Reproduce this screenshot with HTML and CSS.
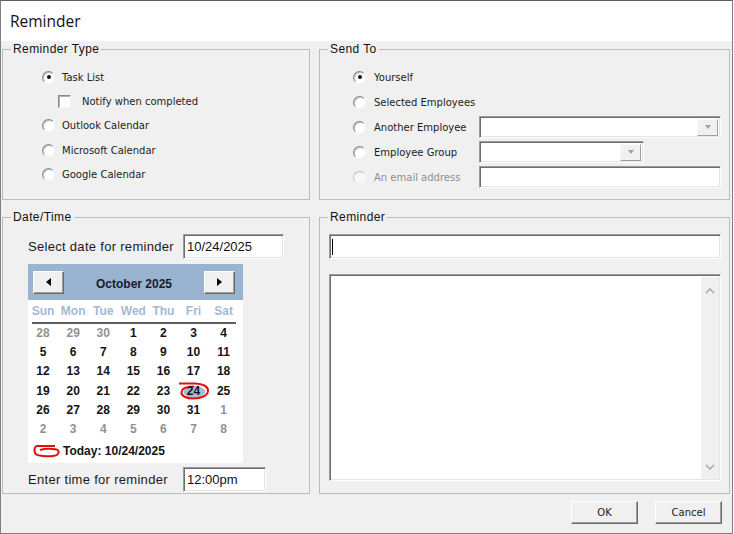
FILE: index.html
```html
<!DOCTYPE html>
<html lang="en">
<head>
  <meta charset="UTF-8">
  <title>Reminder</title>
  <link rel="stylesheet" href="styles.css">
</head>
<body>
  <div class="window">
    <div class="titlebar">Reminder</div>
    <div class="content">
      <div class="groups">

        <fieldset class="group">
          <legend>Reminder Type</legend>
          <div class="type-list">
            <div class="opt"><span class="radio checked"></span>Task List</div>
            <div class="opt sub"><span class="check"></span>Notify when completed</div>
            <div class="opt"><span class="radio"></span>Outlook Calendar</div>
            <div class="opt"><span class="radio"></span>Microsoft Calendar</div>
            <div class="opt"><span class="radio"></span>Google Calendar</div>
          </div>
        </fieldset>

        <fieldset class="group">
          <legend>Send To</legend>
          <div class="send-list">
            <div class="opt"><span class="radio checked"></span><span class="opt-text">Yourself</span></div>
            <div class="opt"><span class="radio"></span><span class="opt-text">Selected Employees</span></div>
            <div class="opt">
              <span class="radio"></span><span class="opt-text">Another Employee</span>
              <div class="field combo combo-wide"><span class="drop"><span class="tri"></span></span></div>
            </div>
            <div class="opt">
              <span class="radio"></span><span class="opt-text">Employee Group</span>
              <div class="field combo combo-short"><span class="drop"><span class="tri"></span></span></div>
            </div>
            <div class="opt disabled">
              <span class="radio"></span><span class="opt-text">An email address</span>
              <div class="field email"></div>
            </div>
          </div>
        </fieldset>

        <fieldset class="group">
          <legend>Date/Time</legend>
          <div class="date-body">
            <div class="field-row">
              <span class="label">Select date for reminder</span>
              <div class="field text date-input">10/24/2025</div>
            </div>

            <div class="calendar">
              <div class="cal-head">
                <span class="nav"><span class="arrow-left"></span></span>
                <span class="month">October 2025</span>
                <span class="nav"><span class="arrow-right"></span></span>
              </div>
              <div class="weekdays">
                <span>Sun</span><span>Mon</span><span>Tue</span><span>Wed</span><span>Thu</span><span>Fri</span><span>Sat</span>
              </div>
              <div class="sep"></div>
              <div class="days">
                <span class="other">28</span><span class="other">29</span><span class="other">30</span><span>1</span><span>2</span><span>3</span><span>4</span>
                <span>5</span><span>6</span><span>7</span><span>8</span><span>9</span><span>10</span><span>11</span>
                <span>12</span><span>13</span><span>14</span><span>15</span><span>16</span><span>17</span><span>18</span>
                <span>19</span><span>20</span><span>21</span><span>22</span><span>23</span>
                <span class="selected">
                  <svg class="scribble" width="32" height="20" viewBox="0 0 32 20">
                    <ellipse cx="16.5" cy="11" rx="11" ry="6" fill="#a9bcd6"/>
                    <path d="M1 2.5 H17 C24 2.8 30.5 5 30 10 C29.5 15 23 17.5 15.5 17.5 C8 17.5 3 15 3.5 11 C4 7.5 9 5.5 16 5.5" fill="none" stroke="#e01010" stroke-width="2"/>
                  </svg>
                  <b>24</b>
                </span>
                <span>25</span>
                <span>26</span><span>27</span><span>28</span><span>29</span><span>30</span><span>31</span><span class="other">1</span>
                <span class="other">2</span><span class="other">3</span><span class="other">4</span><span class="other">5</span><span class="other">6</span><span class="other">7</span><span class="other">8</span>
              </div>
              <div class="today-row">
                <svg width="28" height="14" viewBox="0 0 28 14">
                  <path d="M22 2 H4 C1.5 2.5 1 6 2 9 C3.5 12 12 12.5 20 12 C26.5 11.5 27.5 6 22.5 5.2 C17 4.6 10 5 7 6" fill="none" stroke="#e01010" stroke-width="2"/>
                </svg>
                <span>Today: 10/24/2025</span>
              </div>
            </div>

            <div class="field-row time-row">
              <span class="label">Enter time for reminder</span>
              <div class="field text time-input">12:00pm</div>
            </div>
          </div>
        </fieldset>

        <fieldset class="group">
          <legend>Reminder</legend>
          <div class="memo-body">
            <div class="field subject"><span class="caret"></span></div>
            <div class="field memo">
              <div class="scroll">
                <svg width="10" height="6" viewBox="0 0 10 6"><path d="M1 5 L5 1 L9 5" fill="none" stroke="#a8a8a8" stroke-width="1.5"/></svg>
                <svg width="10" height="6" viewBox="0 0 10 6"><path d="M1 1 L5 5 L9 1" fill="none" stroke="#a8a8a8" stroke-width="1.5"/></svg>
              </div>
            </div>
          </div>
        </fieldset>

      </div>

      <div class="buttons">
        <span class="btn">OK</span>
        <span class="btn">Cancel</span>
      </div>
    </div>
  </div>
</body>
</html>
```

FILE: styles.css
```css
* {
  box-sizing: border-box;
}

body {
  margin: 0;
  background: #fff;
  font-family: "DejaVu Sans", sans-serif;
  font-size: 10px;
  color: #1c1c1c;
}

.window {
  width: 733px;
  height: 534px;
  border: 1px solid #808080;
  border-top-color: #5c5c5c;
  display: flex;
  flex-direction: column;
}

.titlebar {
  height: 40px;
  flex: none;
  display: flex;
  align-items: center;
  padding-left: 9px;
  background: #fff;
  font-family: "Open Sans", sans-serif;
  font-size: 15.5px;
  color: #111;
}

.content {
  flex: 1;
  background: #f0f0f0;
  padding: 0 2px 0 1px;
}

.groups {
  display: grid;
  grid-template-columns: 308px 411px;
  grid-template-rows: 159px 285px;
  column-gap: 9px;
  row-gap: 9px;
}

.group {
  margin: 0;
  padding: 0;
  min-width: 0;
  border: 1px solid #bcbcbc;
}

.group legend {
  margin-left: 8px;
  padding: 0 2px;
  font-family: "Liberation Sans", Arial, sans-serif;
  font-size: 12px;
  line-height: 16px;
  letter-spacing: 0.4px;
  color: #111;
}

/* radio rows */
.opt {
  display: flex;
  align-items: center;
  white-space: nowrap;
}

.type-list {
  padding: 8px 0 0 39px;
}

.type-list .opt {
  height: 24.3px;
  gap: 7px;
}

.type-list .opt.sub {
  padding-left: 16px;
  gap: 11px;
}

.send-list {
  padding: 7.5px 0 0 33px;
}

.send-list .opt {
  height: 25px;
  gap: 8px;
}

.send-list .opt-text {
  width: 97px;
}

.opt.disabled {
  color: #8f8f8f;
}

.radio {
  width: 13px;
  height: 13px;
  flex: none;
  border-radius: 50%;
  background: #fff;
  border: 1px solid;
  border-color: #8a8a8a #f4f4f4 #f4f4f4 #8a8a8a;
  box-shadow: inset 1px 1px 0 #bdbdbd;
  display: flex;
  align-items: center;
  justify-content: center;
}

.radio.checked::after {
  content: "";
  width: 4px;
  height: 4px;
  border-radius: 50%;
  background: #111;
}

.opt.disabled .radio {
  border-color: #bdbdbd #f4f4f4 #f4f4f4 #bdbdbd;
  box-shadow: none;
  background: #f7f7f7;
}

.check {
  width: 13px;
  height: 13px;
  flex: none;
  background: #fff;
  border: 1px solid;
  border-color: #8a8a8a #f4f4f4 #f4f4f4 #8a8a8a;
  box-shadow: inset 1px 1px 0 #b0b0b0;
}

/* sunken fields */
.field {
  background: #fff;
  border: 1px solid;
  border-color: #9a9a9a #fdfdfd #fdfdfd #9a9a9a;
  box-shadow: inset 1px 1px 0 #6e6e6e, inset -1px -1px 0 #e4e4e4;
}

.combo {
  height: 22px;
  display: flex;
  justify-content: flex-end;
  align-items: center;
  padding: 2px;
}

.combo-wide {
  width: 242px;
}

.combo-short {
  width: 165px;
}

.email {
  width: 242px;
  height: 22px;
}

.drop {
  width: 21px;
  height: 17px;
  background: #f0f0f0;
  border: 1px solid;
  border-color: #fafafa #a0a0a0 #a0a0a0 #fafafa;
  display: flex;
  align-items: center;
  justify-content: center;
}

.tri {
  width: 0;
  height: 0;
  border-left: 3.5px solid transparent;
  border-right: 3.5px solid transparent;
  border-top: 4px solid #a0a0a0;
}

/* date / time */
.date-body {
  padding: 9px 0 0 25px;
}

.field-row {
  display: flex;
  align-items: center;
}

.field-row .label {
  width: 155px;
  font-family: "Liberation Sans", Arial, sans-serif;
  font-size: 13px;
  letter-spacing: 0.3px;
  color: #1a1a1a;
}

.text {
  height: 25px;
  display: flex;
  align-items: center;
  padding-left: 3px;
  font-family: "Liberation Sans", Arial, sans-serif;
  font-size: 13px;
  color: #111;
}

.date-input {
  width: 101px;
}

.time-input {
  width: 83px;
}

.time-row {
  margin-top: 4px;
}

.calendar {
  margin-top: 5px;
  width: 215px;
  height: 199px;
  background: #fff;
  font-family: "Liberation Sans", Arial, sans-serif;
  font-size: 12px;
  font-weight: bold;
}

.cal-head {
  height: 36px;
  background: #99b4d1;
  display: flex;
  align-items: center;
  justify-content: space-between;
  padding: 0 8px 0 5px;
}

.month {
  margin-top: 3px;
  color: #1a1a2a;
}

.nav {
  width: 31px;
  height: 23px;
  background: #f0f0f0;
  border: 1px solid;
  border-color: #fff #6a6a6a #6a6a6a #fff;
  box-shadow: inset -1px -1px 0 #a0a0a0;
  display: flex;
  align-items: center;
  justify-content: center;
}

.arrow-left {
  width: 0;
  height: 0;
  border-top: 4px solid transparent;
  border-bottom: 4px solid transparent;
  border-right: 5px solid #000;
}

.arrow-right {
  width: 0;
  height: 0;
  border-top: 4px solid transparent;
  border-bottom: 4px solid transparent;
  border-left: 5px solid #000;
}

.weekdays,
.days {
  display: grid;
  grid-template-columns: repeat(7, 30.1px);
  text-align: center;
}

.weekdays {
  height: 22px;
  line-height: 22px;
  color: #a5b9d4;
}

.sep {
  height: 2px;
  margin: 0 7px 0 4px;
  background: #5e5e5e;
}

.days {
  grid-auto-rows: 19.2px;
  line-height: 19.2px;
  color: #141414;
}

.days .other {
  color: #929292;
}

.days .selected {
  position: relative;
}

.days .selected b {
  position: relative;
}

.scribble {
  position: absolute;
  left: 0;
  top: -1px;
}

.today-row {
  height: 24px;
  display: flex;
  align-items: center;
  gap: 2px;
  padding-left: 5px;
  color: #141414;
}

/* reminder text */
.memo-body {
  padding: 9px 0 0 9px;
}

.subject {
  width: 392px;
  height: 25px;
  display: flex;
  align-items: center;
  padding-left: 2px;
}

.caret {
  width: 1px;
  height: 16px;
  background: #000;
}

.memo {
  margin-top: 15px;
  width: 392px;
  height: 207px;
  display: flex;
  justify-content: flex-end;
  padding: 2px 1px 1px 2px;
}

.scroll {
  width: 18px;
  background: #f0f0f0;
  display: flex;
  flex-direction: column;
  align-items: center;
  justify-content: space-between;
  padding: 11px 0 9px;
}

/* dialog buttons */
.buttons {
  display: flex;
  justify-content: flex-end;
  gap: 17px;
  margin-top: 7px;
  padding-right: 8px;
}

.btn {
  width: 67px;
  height: 23px;
  display: flex;
  align-items: center;
  justify-content: center;
  background: #f0f0f0;
  border: 1px solid;
  border-color: #fff #6a6a6a #6a6a6a #fff;
  box-shadow: inset -1px -1px 0 #a0a0a0;
  color: #1a1a1a;
}
```
